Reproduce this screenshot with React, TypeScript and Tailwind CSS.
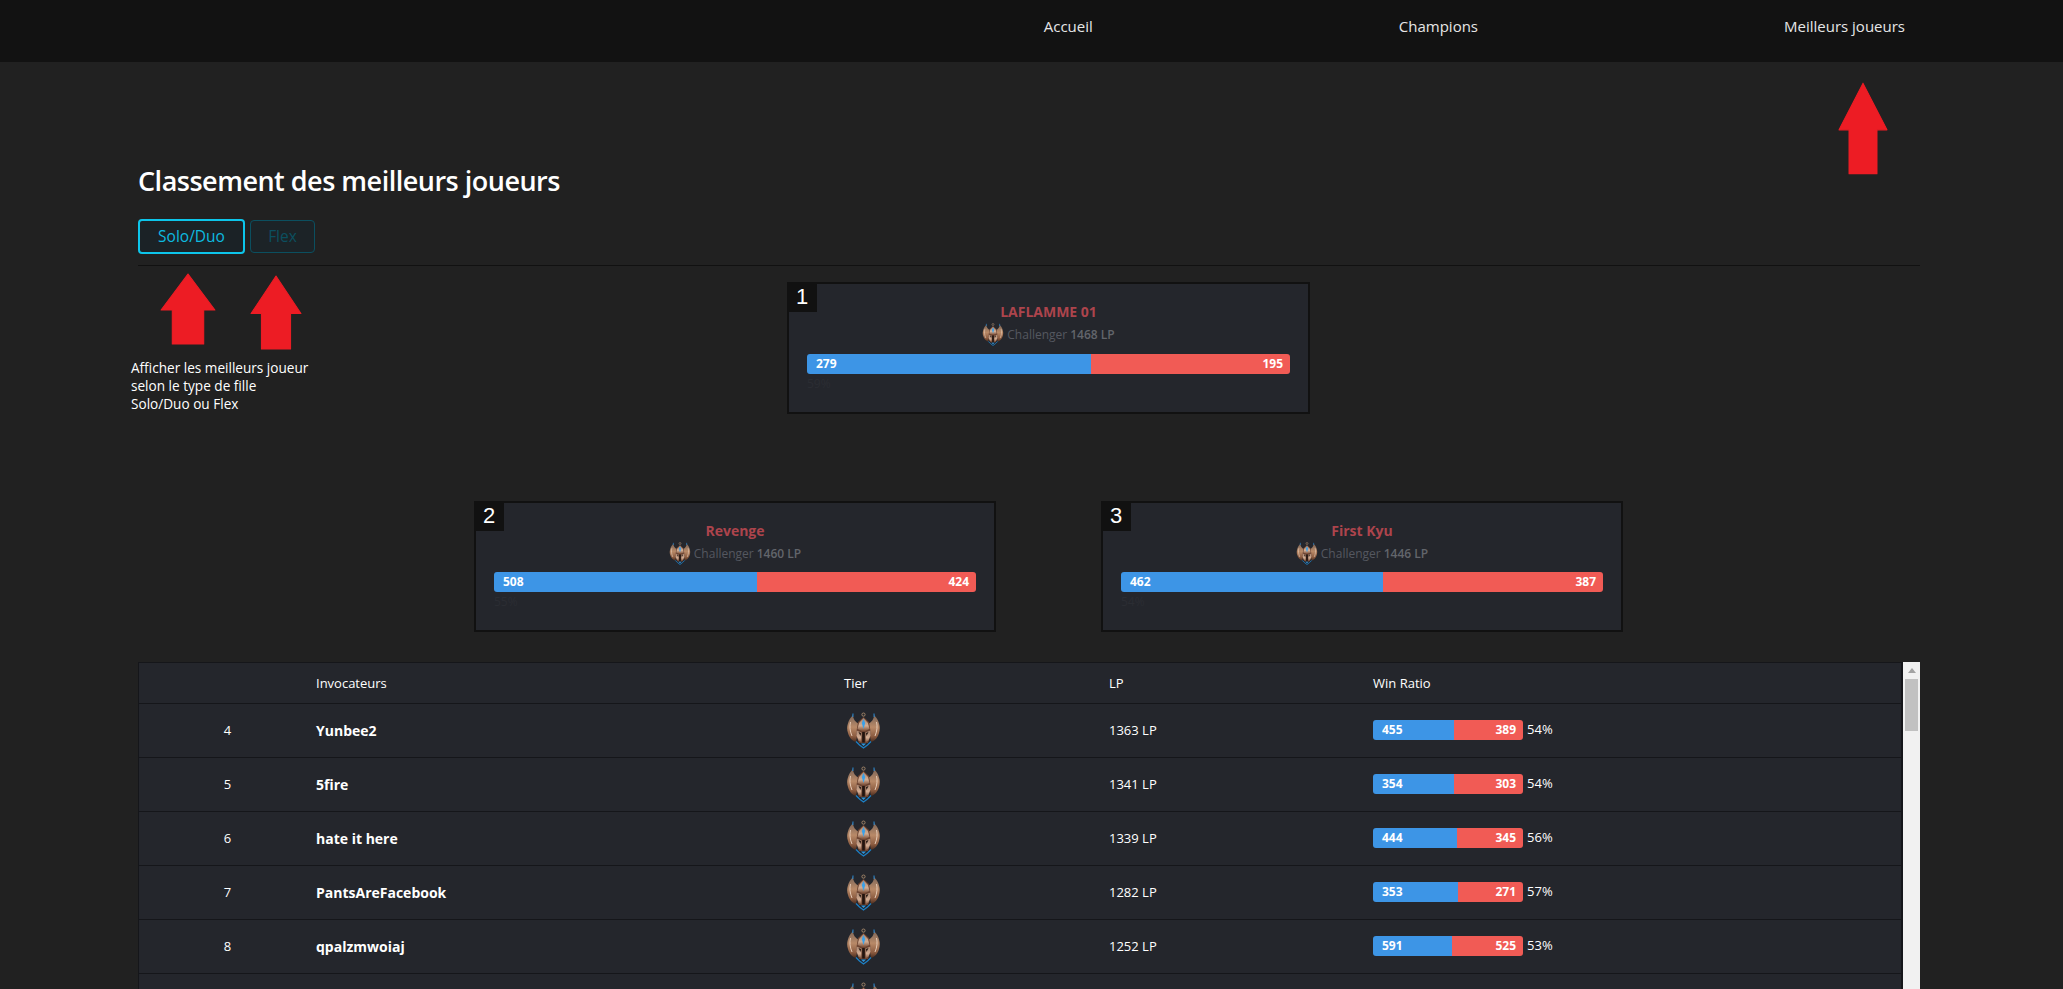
const FONT = "font-['Open_Sans','Noto_Sans',sans-serif]";
const ROW_GRID = 'grid grid-cols-[177px_528px_265px_264px_1fr] items-center';

const topPlayers = [
  { rank: 1, name: 'LAFLAMME 01', lp: 1468, wins: 279, losses: 195, ratio: 59 },
  { rank: 2, name: 'Revenge', lp: 1460, wins: 508, losses: 424, ratio: 55 },
  { rank: 3, name: 'First Kyu', lp: 1446, wins: 462, losses: 387, ratio: 54 },
];

const players = [
  { rank: 4, name: 'Yunbee2', lp: 1363, wins: 455, losses: 389, ratio: 54 },
  { rank: 5, name: '5fire', lp: 1341, wins: 354, losses: 303, ratio: 54 },
  { rank: 6, name: 'hate it here', lp: 1339, wins: 444, losses: 345, ratio: 56 },
  { rank: 7, name: 'PantsAreFacebook', lp: 1282, wins: 353, losses: 271, ratio: 57 },
  { rank: 8, name: 'qpalzmwoiaj', lp: 1252, wins: 591, losses: 525, ratio: 53 },
];

function ChallengerIcon({ className }: { className: string }) {
  return (
    <svg viewBox="0 0 35 37" className={className}>
      <defs>
        <linearGradient id="bronze" x1="0" y1="0" x2="0" y2="1">
          <stop offset="0" stopColor="#7b6558" />
          <stop offset="0.45" stopColor="#b98a68" />
          <stop offset="0.8" stopColor="#8a5a3f" />
          <stop offset="1" stopColor="#4a2c1e" />
        </linearGradient>
        <linearGradient id="plate" x1="0" y1="0" x2="0" y2="1">
          <stop offset="0" stopColor="#a98670" />
          <stop offset="0.6" stopColor="#d2ad94" />
          <stop offset="1" stopColor="#7a4f38" />
        </linearGradient>
      </defs>
      {/* wings */}
      <path d="M7 3 C2 8 0 15 2 21 C3 25 6 29 10 30 L13 12 C9 10 7 7 7 3 Z" fill="url(#bronze)" />
      <path d="M28 3 C33 8 35 15 33 21 C32 25 29 29 25 30 L22 12 C26 10 28 7 28 3 Z" fill="url(#bronze)" />
      <path d="M4.5 10 C3.5 14 3.8 19 6 24" stroke="#ecd3bf" strokeWidth="0.9" fill="none" />
      <path d="M30.5 10 C31.5 14 31.2 19 29 24" stroke="#ecd3bf" strokeWidth="0.9" fill="none" />
      <path d="M7 1.5 L6.8 5 M28 1.5 L28.2 5" stroke="#2a86cc" strokeWidth="1.1" />
      {/* helmet */}
      <path d="M17.5 5 L23 10 L25 22 L22 31 H13 L10 22 L12 10 Z" fill="#6b4331" />
      <path d="M17.5 6 L22 11 L23.5 17 L19 19 H16 L11.5 17 L13 11 Z" fill="url(#plate)" />
      <path d="M10.5 18.5 L15.5 20.5 L15.3 30.5 L12.5 28.5 L10.5 23.5 Z" fill="url(#plate)" />
      <path d="M24.5 18.5 L19.5 20.5 L19.7 30.5 L22.5 28.5 L24.5 23.5 Z" fill="url(#plate)" />
      <path d="M16.2 20 H18.8 V30.5 H16.2 Z" fill="#22140f" />
      <path d="M12.5 20 L15 21 L14.5 24 Z M22.5 20 L20 21 L20.5 24 Z" fill="#22140f" />
      {/* gem and ring */}
      <path d="M17.5 7 L19.2 11 L17.5 17 L15.8 11 Z" fill="#3aa0e8" />
      <circle cx="17.5" cy="2.6" r="1.6" fill="none" stroke="#a88a6c" strokeWidth="0.9" />
      {/* blue trim */}
      <path d="M10 29.5 L13.5 33 L17.5 36 L21.5 33 L25 29.5" stroke="#1d7fc4" strokeWidth="1.3" fill="none" />
      <path d="M15 31.5 H20 L17.5 34 Z" fill="#2f95dc" />
    </svg>
  );
}

function RedArrow({ className }: { className: string }) {
  return (
    <svg viewBox="0 0 50 72" preserveAspectRatio="none" className={`absolute ${className}`}>
      <path
        d="M25 1 L49 37 H39 V71 H11 V37 H1 Z"
        fill="#ed1c24"
        stroke="#ed1c24"
        strokeWidth="1"
        strokeLinejoin="round"
      />
    </svg>
  );
}

function WinBar({ wins, losses, className }: { wins: number; losses: number; className: string }) {
  return (
    <div className={`flex h-5 overflow-hidden rounded-[3px] text-xs font-bold leading-5 text-white ${className}`}>
      <div className="bg-[#3d95e6] pl-[9px]" style={{ width: `${(wins / (wins + losses)) * 100}%` }}>
        {wins}
      </div>
      <div className="flex-1 bg-[#f15b55] pr-[7px] text-right">{losses}</div>
    </div>
  );
}

function TopCard({ player, short }: { player: (typeof topPlayers)[number]; short?: boolean }) {
  return (
    <div className={`relative border-2 border-[#111111] bg-[#24262c] px-[18px] ${short ? 'h-[131px] w-[522px]' : 'h-[132px] w-[523px]'}`}>
      <div className="absolute -left-0.5 -top-0.5 h-[30px] w-[30px] bg-[#111111] text-center font-['Liberation_Sans',sans-serif] text-[22px] leading-[30px] text-white">
        {player.rank}
      </div>
      <div className="mt-[19px] text-center text-sm font-bold leading-[18px] text-[#ad444c]">{player.name}</div>
      <div className="-mt-px flex h-[29px] items-center justify-center text-xs text-[#555860]">
        <ChallengerIcon className="mr-[3px] h-[29px] w-[22px]" />
        <span>Challenger</span>
        <span className="ml-[3px] font-semibold text-[#62656b]">{player.lp} LP</span>
      </div>
      <WinBar wins={player.wins} losses={player.losses} className={short ? 'mt-1' : 'mt-[5px]'} />
      <div className="mt-[2px] text-xs text-[#2b2d33]">{player.ratio}%</div>
    </div>
  );
}

export default function App() {
  return (
    <div className={`relative h-[989px] overflow-hidden bg-[#212121] text-white ${FONT}`}>
      <nav className="flex h-[62px] items-start justify-end gap-[306px] bg-[#121212] pr-[158px] pt-[15px] text-[15px] leading-[22px] text-[#e6e6e6]">
        <a>Accueil</a>
        <a>Champions</a>
        <a>Meilleurs joueurs</a>
      </nav>

      <main className="pl-[138px] pr-[143px] pt-[98px]">
        <h1 className="text-[27px] font-semibold leading-[42px] tracking-[-0.5px]">Classement des meilleurs joueurs</h1>
        <div className="mt-[17px] flex items-center gap-[5px] text-[15.5px]">
          <button className="h-[35px] w-[107px] rounded border-2 border-[#0dc5ea] bg-[#1b2226] pt-px text-[#0dbbe0]">
            Solo/Duo
          </button>
          <button className="h-[33px] w-[65px] rounded border border-[#0b4f5f] bg-[#1c2327] pt-px text-[#0b4f5f]">
            Flex
          </button>
        </div>
        <hr className="mt-[11px] border-t border-[#111111]" />

        <div className="mt-4 flex justify-center pl-[39px]">
          <TopCard player={topPlayers[0]} />
        </div>
        <div className="mt-[87px] flex justify-center gap-[105px] pl-[39px]">
          <TopCard player={topPlayers[1]} short />
          <TopCard player={topPlayers[2]} short />
        </div>

        <div className="mt-[30px] flex">
          <div className="flex-1 border-l border-t border-r-2 border-[#15161a] bg-[#24262c] text-[13px]">
            <div className={`${ROW_GRID} h-[41px] border-b border-[#15161a] pt-0.5`}>
              <div />
              <div>Invocateurs</div>
              <div>Tier</div>
              <div>LP</div>
              <div>Win Ratio</div>
            </div>
            {players.map((p) => (
              <div key={p.rank} className={`${ROW_GRID} h-[54px] border-b border-[#15161a]`}>
                <div className="text-center">{p.rank}</div>
                <div className="text-sm font-bold">{p.name}</div>
                <div>
                  <ChallengerIcon className="ml-0.5 -mt-px h-[37px] w-[35px]" />
                </div>
                <div>{p.lp} LP</div>
                <div className="-mt-px flex items-center">
                  <WinBar wins={p.wins} losses={p.losses} className="w-[150px]" />
                  <span className="-mt-px ml-[4px]">{p.ratio}%</span>
                </div>
              </div>
            ))}
            <div className={`${ROW_GRID} h-[54px]`}>
              <div />
              <div />
              <ChallengerIcon className="ml-0.5 -mt-px h-[37px] w-[35px]" />
            </div>
          </div>
          <div className="w-[17px] shrink-0 bg-[#f1f1f1]">
            <div className="flex h-[17px] items-center justify-center">
              <div className="h-0 w-0 border-x-4 border-b-[5px] border-x-transparent border-b-[#a3a3a3]" />
            </div>
            <div className="mx-[2px] h-[52px] bg-[#c1c1c1]" />
          </div>
        </div>
      </main>

      <RedArrow className="left-[160px] top-[273px] h-[72px] w-[56px]" />
      <RedArrow className="left-[250px] top-[275px] h-[75px] w-[52px]" />
      <RedArrow className="left-[1838px] top-[82px] h-[93px] w-[50px]" />
      <p className="absolute left-[131px] top-[359px] text-[13.6px] leading-[18px]">
        Afficher les meilleurs joueur
        <br />
        selon le type de fille
        <br />
        Solo/Duo ou Flex
      </p>
    </div>
  );
}
